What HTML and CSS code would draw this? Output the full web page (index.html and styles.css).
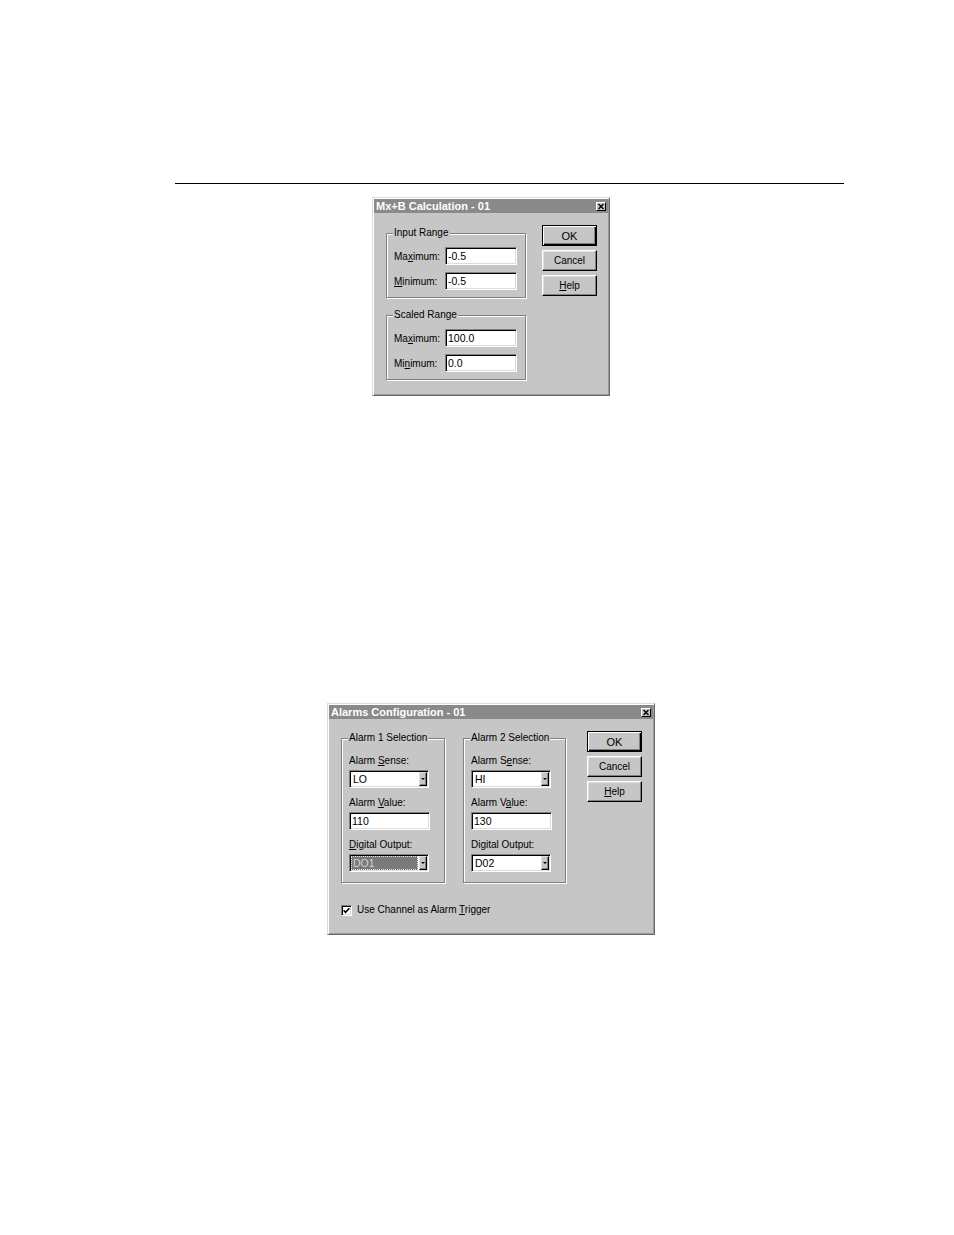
FILE: index.html
```html
<!DOCTYPE html>
<html>
<head>
<meta charset="utf-8">
<title>Dialogs</title>
<link rel="stylesheet" href="styles.css">
</head>
<body>
<div class="page">
  <div class="rule"></div>

  <div class="dlg dlg1">
    <div class="title">
      <span>Mx+B Calculation - 01</span>
      <span class="close"><svg width="8" height="7" viewBox="0 0 8 7"><path d="M1.5 1 L6.5 6 M6.5 1 L1.5 6" stroke="#000" stroke-width="1.4" fill="none"/></svg></span>
    </div>
    <div class="body">
      <div class="groups">
        <fieldset class="grp grp1">
          <legend>Input Range</legend>
          <div class="frow"><label>Ma<u>x</u>imum:</label><div class="field">-0.5</div></div>
          <div class="frow"><label><u>M</u>inimum:</label><div class="field">-0.5</div></div>
        </fieldset>
        <fieldset class="grp grp1">
          <legend>Scaled Range</legend>
          <div class="frow"><label>Ma<u>x</u>imum:</label><div class="field">100.0</div></div>
          <div class="frow"><label>Mi<u>n</u>imum:</label><div class="field">0.0</div></div>
        </fieldset>
      </div>
      <div class="buttons">
        <button class="btn def">OK</button>
        <button class="btn">Cancel</button>
        <button class="btn"><span><u>H</u>elp</span></button>
      </div>
    </div>
  </div>

  <div class="dlg dlg2">
    <div class="title">
      <span>Alarms Configuration - 01</span>
      <span class="close"><svg width="8" height="7" viewBox="0 0 8 7"><path d="M1.5 1 L6.5 6 M6.5 1 L1.5 6" stroke="#000" stroke-width="1.4" fill="none"/></svg></span>
    </div>
    <div class="body2">
      <div class="row2">
        <div class="groups2">
          <fieldset class="grp grp2 g1">
            <legend>Alarm 1 Selection</legend>
            <div class="fld">
              <div class="lab">Alarm <u>S</u>ense:</div>
              <div class="select ctl"><span class="val">LO</span><span class="arrow"><i></i></span></div>
            </div>
            <div class="fld">
              <div class="lab">Alarm <u>V</u>alue:</div>
              <div class="field wide ctl">110</div>
            </div>
            <div class="fld">
              <div class="lab"><u>D</u>igital Output:</div>
              <div class="select ctl"><span class="val sel"><span>DO1</span></span><span class="arrow"><i></i></span></div>
            </div>
          </fieldset>
          <fieldset class="grp grp2 g2">
            <legend>Alarm 2 Selection</legend>
            <div class="fld">
              <div class="lab">Alarm S<u>e</u>nse:</div>
              <div class="select ctl"><span class="val">HI</span><span class="arrow"><i></i></span></div>
            </div>
            <div class="fld">
              <div class="lab">Alarm V<u>a</u>lue:</div>
              <div class="field wide ctl">130</div>
            </div>
            <div class="fld">
              <div class="lab">Digital Output:</div>
              <div class="select ctl"><span class="val">D02</span><span class="arrow"><i></i></span></div>
            </div>
          </fieldset>
        </div>
        <div class="buttons buttons2">
          <button class="btn def">OK</button>
          <button class="btn">Cancel</button>
          <button class="btn"><span><u>H</u>elp</span></button>
        </div>
      </div>
      <div class="check">
        <span class="cbox"><svg width="7" height="7" viewBox="0 0 7 7"><path d="M0.6 3.2 L2.6 5.3 L6.4 1.2" stroke="#000" stroke-width="1.6" fill="none"/></svg></span>
        <span>Use Channel as Alarm <u>T</u>rigger</span>
      </div>
    </div>
  </div>
</div>
</body>
</html>
```

FILE: styles.css
```css
* { box-sizing: border-box; }
html, body { margin: 0; padding: 0; background: #fff; }
body {
  font-family: "Liberation Sans", Arial, sans-serif;
  font-size: 10px;
  color: #000;
}
.page { width: 954px; min-height: 1235px; padding-top: 183px; }
.rule { margin-left: 175px; width: 669px; height: 1px; background: #000; }

.dlg {
  background: #c6c6c6;
  border: 1px solid;
  border-color: #dcdcdc #6a6a6a #6a6a6a #dcdcdc;
  box-shadow: inset 1px 1px 0 #fff, inset -1px -1px 0 #9a9a9a;
  padding: 1px;
  display: flex;
  flex-direction: column;
}
.dlg1 { margin: 13px 0 0 372px; width: 238px; height: 199px; }
.dlg2 { margin: 307px 0 0 327px; width: 328px; height: 232px; }

.title {
  height: 14px;
  background: #8a8a8a;
  color: #fff;
  font-weight: bold;
  font-size: 11px;
  line-height: 14px;
  padding: 0 2px;
  display: flex;
  align-items: center;
  justify-content: space-between;
  white-space: nowrap;
}
.close {
  width: 10px;
  height: 9px;
  background: #c6c6c6;
  border: 1px solid;
  border-color: #fff #000 #000 #fff;
  display: flex;
  align-items: center;
  justify-content: center;
}
.close svg { display: block; }

.body { display: flex; align-items: flex-start; padding: 0 11px 0 12px; }
.groups { margin-top: 14px; display: flex; flex-direction: column; gap: 11px; }
.buttons { margin-left: auto; margin-top: 12px; display: flex; flex-direction: column; gap: 4px; }

.grp {
  margin: 0;
  min-width: 0;
  border: 1px solid #808080;
  box-shadow: inset 1px 1px 0 #fff, 1px 1px 0 #fff;
}
.grp legend {
  padding: 0 1px;
  margin-left: -1px;
  line-height: 12px;
  font-size: 10px;
  background: #c6c6c6;
}
.grp1 { width: 140px; padding: 8px 8px 7px 7px; }

.frow { display: flex; align-items: center; }
.frow + .frow { margin-top: 7px; }
.frow label { width: 51px; }

.field {
  width: 72px;
  height: 18px;
  background: #fff;
  border: 1px solid;
  border-color: #808080 #fff #fff #808080;
  box-shadow: inset 1px 1px 0 #000, inset -1px -1px 0 #dcdcdc;
  padding: 0 2px;
  line-height: 16px;
  font-size: 10.5px;
  white-space: nowrap;
}
.field.wide { width: 81px; }

.btn {
  appearance: none;
  margin: 0;
  padding: 0;
  width: 55px;
  height: 21px;
  font: inherit;
  font-size: 10px;
  color: #000;
  background: #c6c6c6;
  border: 1px solid;
  border-color: #fff #000 #000 #fff;
  box-shadow: inset -1px -1px 0 #808080, inset 1px 1px 0 #dfdfdf;
  display: flex;
  align-items: center;
  justify-content: center;
}
.btn.def {
  border-color: #000;
  box-shadow: inset 1px 1px 0 #fff, inset -1px -1px 0 #000, inset -2px -2px 0 #808080;
  font-size: 11px;
}

.body2 { padding: 0 11px 0 12px; }
.row2 { display: flex; align-items: flex-start; }
.groups2 { margin-top: 13px; display: flex; gap: 18px; }
.buttons2 { margin-top: 12px; }
.grp2 { padding: 11px 0 10px 7px; }
.g1 { width: 104px; }
.g2 { width: 103px; }
.lab { line-height: 12px; white-space: nowrap; }
.ctl { margin-top: 3px; }
.fld + .fld { margin-top: 9px; }

.select {
  display: flex;
  width: 80px;
  height: 18px;
  background: #fff;
  border: 1px solid;
  border-color: #808080 #fff #fff #808080;
  box-shadow: inset 1px 1px 0 #000, inset -1px -1px 0 #dcdcdc;
  padding: 1px;
}
.select .val {
  flex: 1;
  padding-left: 2px;
  line-height: 14px;
  font-size: 10.5px;
  background: #fff;
}
.select .val.sel {
  background: #7a7a7a;
  color: #d4d4d4;
  outline: 1px dotted #e8e8e8;
  outline-offset: -1px;
  margin-right: 1px;
}
.select .arrow {
  width: 8px;
  background: #c6c6c6;
  border: 1px solid;
  border-color: #dfdfdf #000 #000 #dfdfdf;
  box-shadow: inset -1px -1px 0 #808080;
  display: flex;
  align-items: center;
  justify-content: center;
}
.select .arrow i {
  display: block;
  width: 0;
  height: 0;
  border-left: 2px solid transparent;
  border-right: 2px solid transparent;
  border-top: 2px solid #000;
  margin-right: 1px;
}

.check { display: flex; align-items: center; gap: 5px; margin-top: 21px; line-height: 12px; }
.cbox {
  width: 11px;
  height: 11px;
  background: #fff;
  border: 1px solid;
  border-color: #808080 #fff #fff #808080;
  box-shadow: inset 1px 1px 0 #000, inset -1px -1px 0 #dcdcdc;
  display: flex;
  align-items: center;
  justify-content: center;
}
.cbox svg { display: block; }
```
